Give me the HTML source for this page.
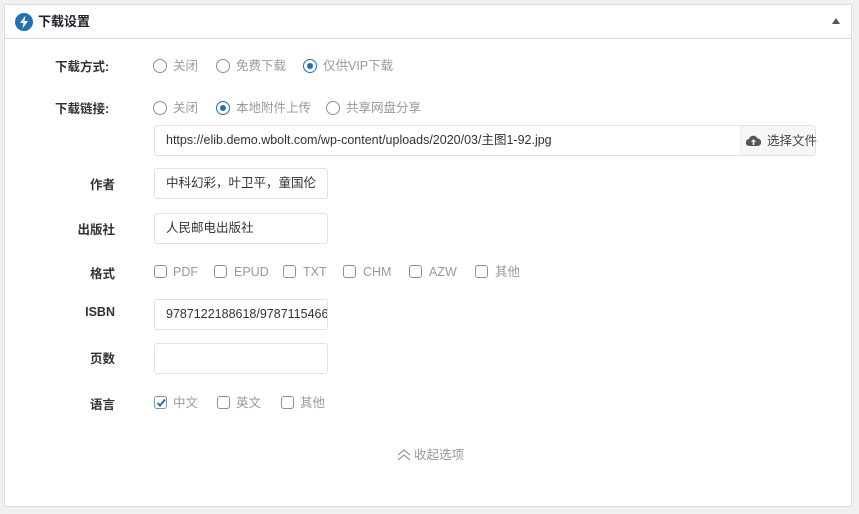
<!DOCTYPE html>
<html><head><meta charset="utf-8"><style>
*{box-sizing:border-box;margin:0;padding:0}
body{width:859px;height:514px;background:#f0f0f1;font-family:"Liberation Sans","Noto Sans CJK SC",sans-serif;position:relative;overflow:hidden}
.box{position:absolute;left:4px;top:4px;width:848px;height:503px;background:#fff;border:1px solid #dcdcde}
.hd{position:absolute;left:0;top:0;right:0;height:34px;border-bottom:1px solid #dcdcde}
.hd .t{position:absolute;left:33px;top:6px;font-size:13px;font-weight:bold;color:#1d2327}
.a{position:absolute}
.lab{position:absolute;font-size:12.5px;font-weight:bold;color:#333;text-align:right;width:100px;left:15px;margin-top:-2px}
.opt{position:absolute;font-size:12.5px;color:#999;line-height:14px}
.r{position:absolute;width:14px;height:14px;border:1px solid #8c8f94;border-radius:50%;background:#fff}
.r.on{border-color:#2271b1}
.r.on:after{content:"";position:absolute;left:3px;top:3px;width:6px;height:6px;border-radius:50%;background:#2271b1}
.c{position:absolute;width:13px;height:13px;border:1px solid #8c8f94;border-radius:3px;background:#fff}
.inp{position:absolute;border:1px solid #e2e2e2;border-radius:3px;background:#fff;font-size:12.5px;color:#333;padding:0 11px;line-height:29px;white-space:nowrap;overflow:hidden}
</style></head><body>
<div class="box">
<div class="hd">
<svg class="a" style="left:10px;top:8px" width="18" height="18" viewBox="0 0 18 18"><circle cx="9" cy="9" r="9" fill="#2271b1"/><path d="M10.5 2.5 L5 10 H8.5 L7.5 15.5 L13 8 H9.5 Z" fill="#fff"/></svg>
<div class="t">下载设置</div>
<div class="a" style="left:827px;top:13px;width:0;height:0;border-left:4px solid transparent;border-right:4px solid transparent;border-bottom:6px solid #50575e"></div>
</div>
</div>
<div class="lab" style="top:58px;left:55px;text-align:left">下载方式:</div>
<div class="r" style="left:153px;top:59px"></div><div class="opt" style="left:173px;top:59px">关闭</div>
<div class="r" style="left:216px;top:59px"></div><div class="opt" style="left:236px;top:59px">免费下载</div>
<div class="r on" style="left:303px;top:59px"></div><div class="opt" style="left:323px;top:59px">仅供VIP下载</div>

<div class="lab" style="top:100px;left:55px;text-align:left">下载链接:</div>
<div class="r" style="left:153px;top:101px"></div><div class="opt" style="left:173px;top:101px">关闭</div>
<div class="r on" style="left:216px;top:101px"></div><div class="opt" style="left:236px;top:101px">本地附件上传</div>
<div class="r" style="left:326px;top:101px"></div><div class="opt" style="left:346px;top:101px">共享网盘分享</div>

<div class="inp" style="left:154px;top:125px;width:662px;height:31px">https://elib.demo.wbolt.com/wp-content/uploads/2020/03/主图1-92.jpg</div>
<div class="a" style="left:740px;top:126px;width:75px;height:29px;background:#f6f6f6;border-left:1px solid #eee"></div>
<svg class="a" style="left:746px;top:134px" width="15" height="13" viewBox="0 0 15 13"><path d="M3.5 12 A3.5 3.5 0 0 1 3 5 A4.5 4.5 0 0 1 11.5 4.5 A3.7 3.7 0 0 1 11.5 12 Z" fill="#555"/><path d="M7.5 5 L10 8 H8.3 V11 H6.7 V8 H5 Z" fill="#f6f6f6"/></svg>
<div class="opt" style="left:767px;top:134px;color:#444">选择文件</div>

<div class="lab" style="top:176px">作者</div>
<div class="inp" style="left:154px;top:168px;width:174px;height:31px">中科幻彩，叶卫平，童国伦</div>
<div class="lab" style="top:221px">出版社</div>
<div class="inp" style="left:154px;top:213px;width:174px;height:31px">人民邮电出版社</div>

<div class="lab" style="top:265px">格式</div>
<div class="c" style="left:154px;top:265px"></div><div class="opt" style="left:173px;top:265px">PDF</div>
<div class="c" style="left:214px;top:265px"></div><div class="opt" style="left:234px;top:265px">EPUD</div>
<div class="c" style="left:283px;top:265px"></div><div class="opt" style="left:303px;top:265px">TXT</div>
<div class="c" style="left:343px;top:265px"></div><div class="opt" style="left:363px;top:265px">CHM</div>
<div class="c" style="left:409px;top:265px"></div><div class="opt" style="left:429px;top:265px">AZW</div>
<div class="c" style="left:475px;top:265px"></div><div class="opt" style="left:495px;top:265px">其他</div>

<div class="lab" style="top:307px">ISBN</div>
<div class="inp" style="left:154px;top:299px;width:174px;height:31px">9787122188618/9787115466</div>
<div class="lab" style="top:350px">页数</div>
<div class="inp" style="left:154px;top:343px;width:174px;height:31px"></div>

<div class="lab" style="top:396px">语言</div>
<div class="c" style="left:154px;top:396px;border-color:#8c8f94"></div>
<svg class="a" style="left:155px;top:397px" width="12" height="12" viewBox="0 0 12 12"><path d="M2.5 6 L5 8.5 L10 2.5" stroke="#2271b1" stroke-width="2" fill="none"/></svg>
<div class="opt" style="left:173px;top:396px">中文</div>
<div class="c" style="left:217px;top:396px"></div><div class="opt" style="left:236px;top:396px">英文</div>
<div class="c" style="left:281px;top:396px"></div><div class="opt" style="left:300px;top:396px">其他</div>

<svg class="a" style="left:397px;top:449px" width="14" height="12" viewBox="0 0 14 12"><path d="M1 6 L7 1 L13 6 M1 11 L7 6 L13 11" stroke="#999" stroke-width="1.2" fill="none"/></svg>
<div class="opt" style="left:414px;top:448px">收起选项</div>
</body></html>
